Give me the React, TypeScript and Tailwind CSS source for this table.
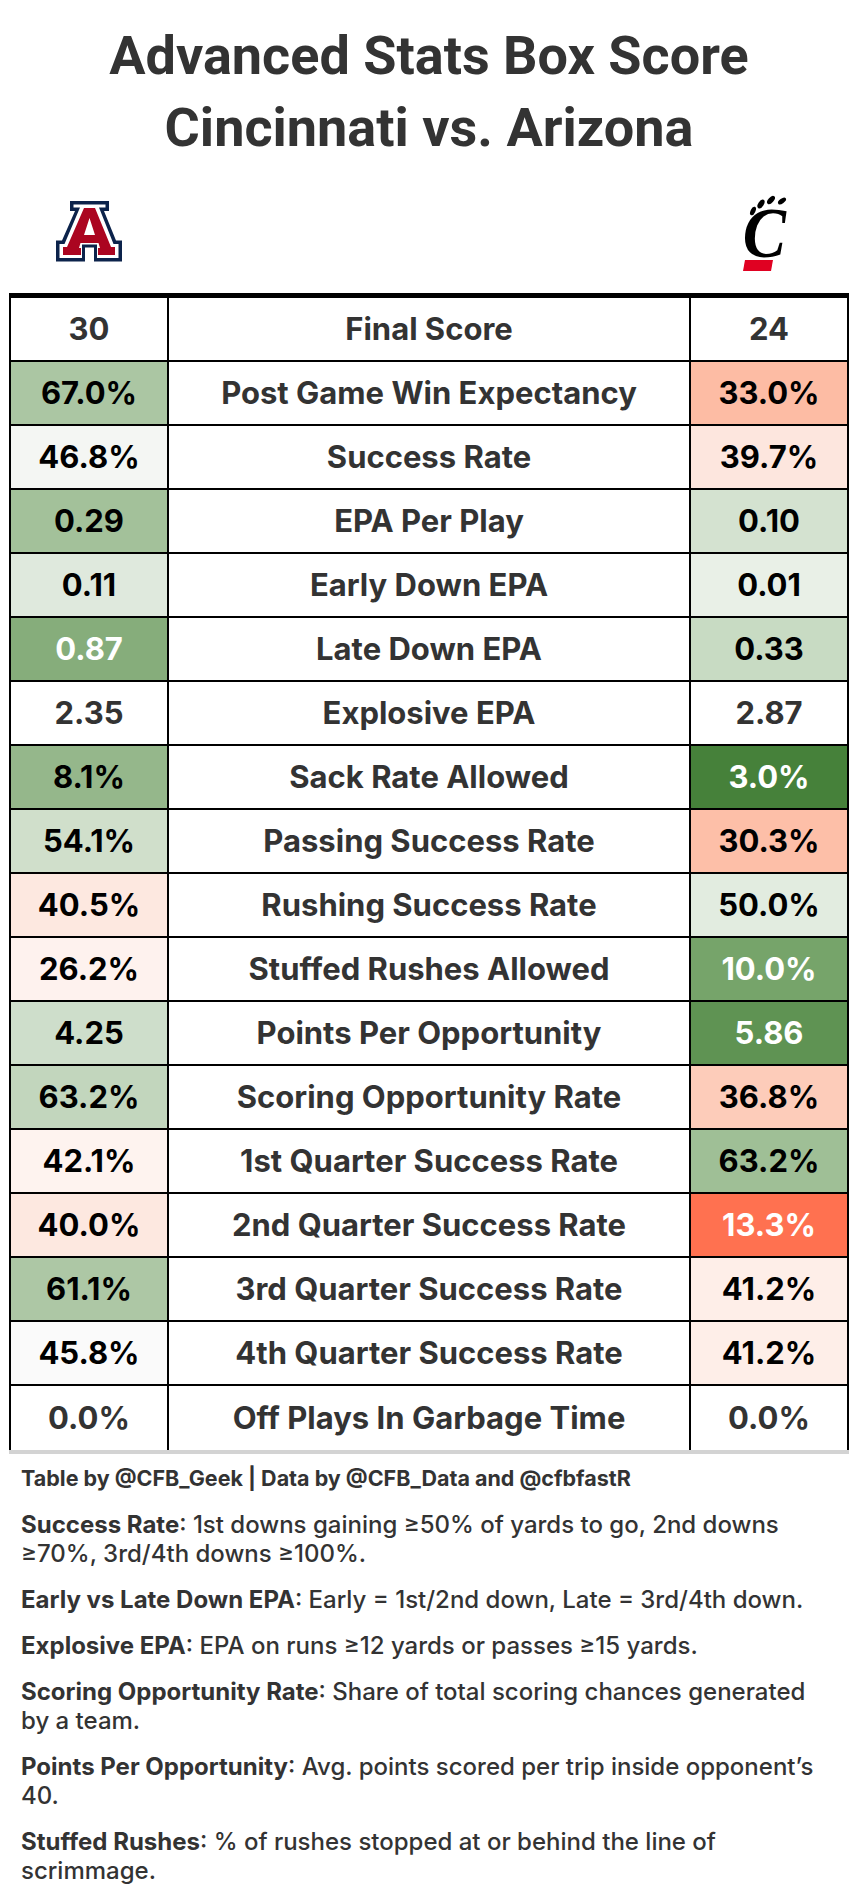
import React from "react";

type Row = {
  away: string;
  label: string;
  home: string;
  awayCls: string;
  homeCls: string;
};

const plain = "bg-white text-[#333]";

const rows: Row[] = [
  { away: "30", label: "Final Score", home: "24", awayCls: plain, homeCls: plain },
  { away: "67.0%", label: "Post Game Win Expectancy", home: "33.0%", awayCls: "bg-[#abc6a3] text-black", homeCls: "bg-[#fdbca4] text-black" },
  { away: "46.8%", label: "Success Rate", home: "39.7%", awayCls: "bg-[#f4f6f3] text-black", homeCls: "bg-[#fde6de] text-black" },
  { away: "0.29", label: "EPA Per Play", home: "0.10", awayCls: "bg-[#a3c19a] text-black", homeCls: "bg-[#d4e2d0] text-black" },
  { away: "0.11", label: "Early Down EPA", home: "0.01", awayCls: "bg-[#dfe9dd] text-black", homeCls: "bg-[#e9f0e7] text-black" },
  { away: "0.87", label: "Late Down EPA", home: "0.33", awayCls: "bg-[#86ad7b] text-white", homeCls: "bg-[#c8dbc3] text-black" },
  { away: "2.35", label: "Explosive EPA", home: "2.87", awayCls: plain, homeCls: plain },
  { away: "8.1%", label: "Sack Rate Allowed", home: "3.0%", awayCls: "bg-[#95b78b] text-black", homeCls: "bg-[#46813a] text-white" },
  { away: "54.1%", label: "Passing Success Rate", home: "30.3%", awayCls: "bg-[#d0dfcb] text-black", homeCls: "bg-[#fdbfa8] text-black" },
  { away: "40.5%", label: "Rushing Success Rate", home: "50.0%", awayCls: "bg-[#fde8e0] text-black", homeCls: "bg-[#e2ece0] text-black" },
  { away: "26.2%", label: "Stuffed Rushes Allowed", home: "10.0%", awayCls: "bg-[#fef2ee] text-black", homeCls: "bg-[#76a46a] text-white" },
  { away: "4.25", label: "Points Per Opportunity", home: "5.86", awayCls: "bg-[#cedecb] text-black", homeCls: "bg-[#5f9353] text-white" },
  { away: "63.2%", label: "Scoring Opportunity Rate", home: "36.8%", awayCls: "bg-[#c2d6bd] text-black", homeCls: "bg-[#fdccba] text-black" },
  { away: "42.1%", label: "1st Quarter Success Rate", home: "63.2%", awayCls: "bg-[#fef3ef] text-black", homeCls: "bg-[#9fbf96] text-black" },
  { away: "40.0%", label: "2nd Quarter Success Rate", home: "13.3%", awayCls: "bg-[#fde8e0] text-black", homeCls: "bg-[#ff7150] text-white" },
  { away: "61.1%", label: "3rd Quarter Success Rate", home: "41.2%", awayCls: "bg-[#adc7a5] text-black", homeCls: "bg-[#feeee8] text-black" },
  { away: "45.8%", label: "4th Quarter Success Rate", home: "41.2%", awayCls: "bg-[#fafafa] text-black", homeCls: "bg-[#feeee8] text-black" },
  { away: "0.0%", label: "Off Plays In Garbage Time", home: "0.0%", awayCls: plain, homeCls: plain },
];

const notes: { term: string; text: React.ReactNode }[] = [
  { term: "Success Rate", text: <>: 1st downs gaining ≥50% of yards to go, 2nd downs<br />≥70%, 3rd/4th downs ≥100%.</> },
  { term: "Early vs Late Down EPA", text: ": Early = 1st/2nd down, Late = 3rd/4th down." },
  { term: "Explosive EPA", text: ": EPA on runs ≥12 yards or passes ≥15 yards." },
  { term: "Scoring Opportunity Rate", text: <>: Share of total scoring chances generated<br />by a team.</> },
  { term: "Points Per Opportunity", text: <>: Avg. points scored per trip inside opponent’s<br />40.</> },
  { term: "Stuffed Rushes", text: <>: % of rushes stopped at or behind the line of<br />scrimmage.</> },
];

// block "A": navy outer, white inline, red letter
function ArizonaLogo(): React.ReactNode {
  return (
    <svg width="72" height="62" viewBox="0 0 72 62">
      <path
        d="M17 0 H56 V10 H51 L63 39.5 H69 V60.5 H41 V46.5 H32 V60.5 H3 V39.5 H9 L22 10 H17 Z"
        fill="#0c234b"
      />
      <path
        d="M20.5 3.5 H52.5 V6.5 H46 L60.5 43 H65.5 V57 H44 V43.5 H29 V57 H6.5 V43 H11.5 L27 6.5 H20.5 Z"
        fill="#ffffff"
      />
      <path
        fillRule="evenodd"
        d="M31 7 H42 L58 46 H62 V54 H45 V47 H47 L45.5 42 H27.5 L26 47 H28 V54 H10 V46 H14 Z M36.5 17 L42 34 H31 Z"
        fill="#ab0520"
      />
    </svg>
  );
}

// bearcat "C" with paw and red bar
function CincinnatiLogo(): React.ReactNode {
  return (
    <svg width="52" height="82" viewBox="0 0 52 82">
      <ellipse cx="12" cy="20" rx="2.4" ry="4.6" transform="rotate(25 12 20)" fill="#000" />
      <ellipse cx="20" cy="13" rx="2.7" ry="5" transform="rotate(32 20 13)" fill="#000" />
      <ellipse cx="30" cy="9" rx="2.7" ry="5" transform="rotate(42 30 9)" fill="#000" />
      <ellipse cx="41" cy="10" rx="2.4" ry="4.6" transform="rotate(55 41 10)" fill="#000" />
      <text
        x="2"
        y="66"
        transform="scale(0.9 1)"
        fontFamily="'Liberation Serif', serif"
        fontWeight="700"
        fontStyle="italic"
        fontSize="72"
        fill="#000"
      >
        C
      </text>
      <polygon points="4,69 32,69 30,80 2,80" fill="#e00122" />
    </svg>
  );
}

export default function App(): React.ReactNode {
  return (
    <div className="w-[858px] min-h-[1898px] bg-white text-[#333] font-['Inter','Roboto',sans-serif]">
      <header className="pt-[20px] text-center font-['Roboto','Inter',sans-serif]">
        <h1 className="text-[54px] leading-[72px] font-bold">Advanced Stats Box Score</h1>
        <h2 className="text-[54px] leading-[72px] font-bold">Cincinnati vs. Arizona</h2>
      </header>

      <div className="mx-[11px] mt-[18px] mb-[11px] grid h-[100px] grid-cols-[156px_1fr_156px] items-center">
        <div className="flex justify-center">
          <ArizonaLogo />
        </div>
        <div />
        <div className="flex justify-center pr-[4px]">
          <CincinnatiLogo />
        </div>
      </div>

      <div className="mx-[9px] border-x-2 border-t-[5px] border-black">
        {rows.map((row, i) => (
          <div
            key={row.label}
            className={`grid h-[64px] grid-cols-[156px_2px_1fr_2px_156px] text-[31px] font-bold ${
              i === rows.length - 1 ? "" : "border-b-2 border-black"
            }`}
          >
            <div className={`flex items-center justify-center ${row.awayCls}`}>{row.away}</div>
            <div className="bg-black" />
            <div className="flex items-center justify-center bg-white text-[#333]">{row.label}</div>
            <div className="bg-black" />
            <div className={`flex items-center justify-center ${row.homeCls}`}>{row.home}</div>
          </div>
        ))}
      </div>
      <div className="mx-[9px] h-[4px] bg-[#d3d3d3]" />

      <footer className="pl-[21px] pr-[8px] pt-[10px] pb-[16px] leading-[29px] text-[#333]">
        <p className="text-[21.5px] font-bold">Table by @CFB_Geek | Data by @CFB_Data and @cfbfastR</p>
        {notes.map((n) => (
          <p key={n.term} className="mt-[17px] whitespace-nowrap text-[24px] font-medium">
            <span className="font-bold">{n.term}</span>
            {n.text}
          </p>
        ))}
      </footer>
    </div>
  );
}
